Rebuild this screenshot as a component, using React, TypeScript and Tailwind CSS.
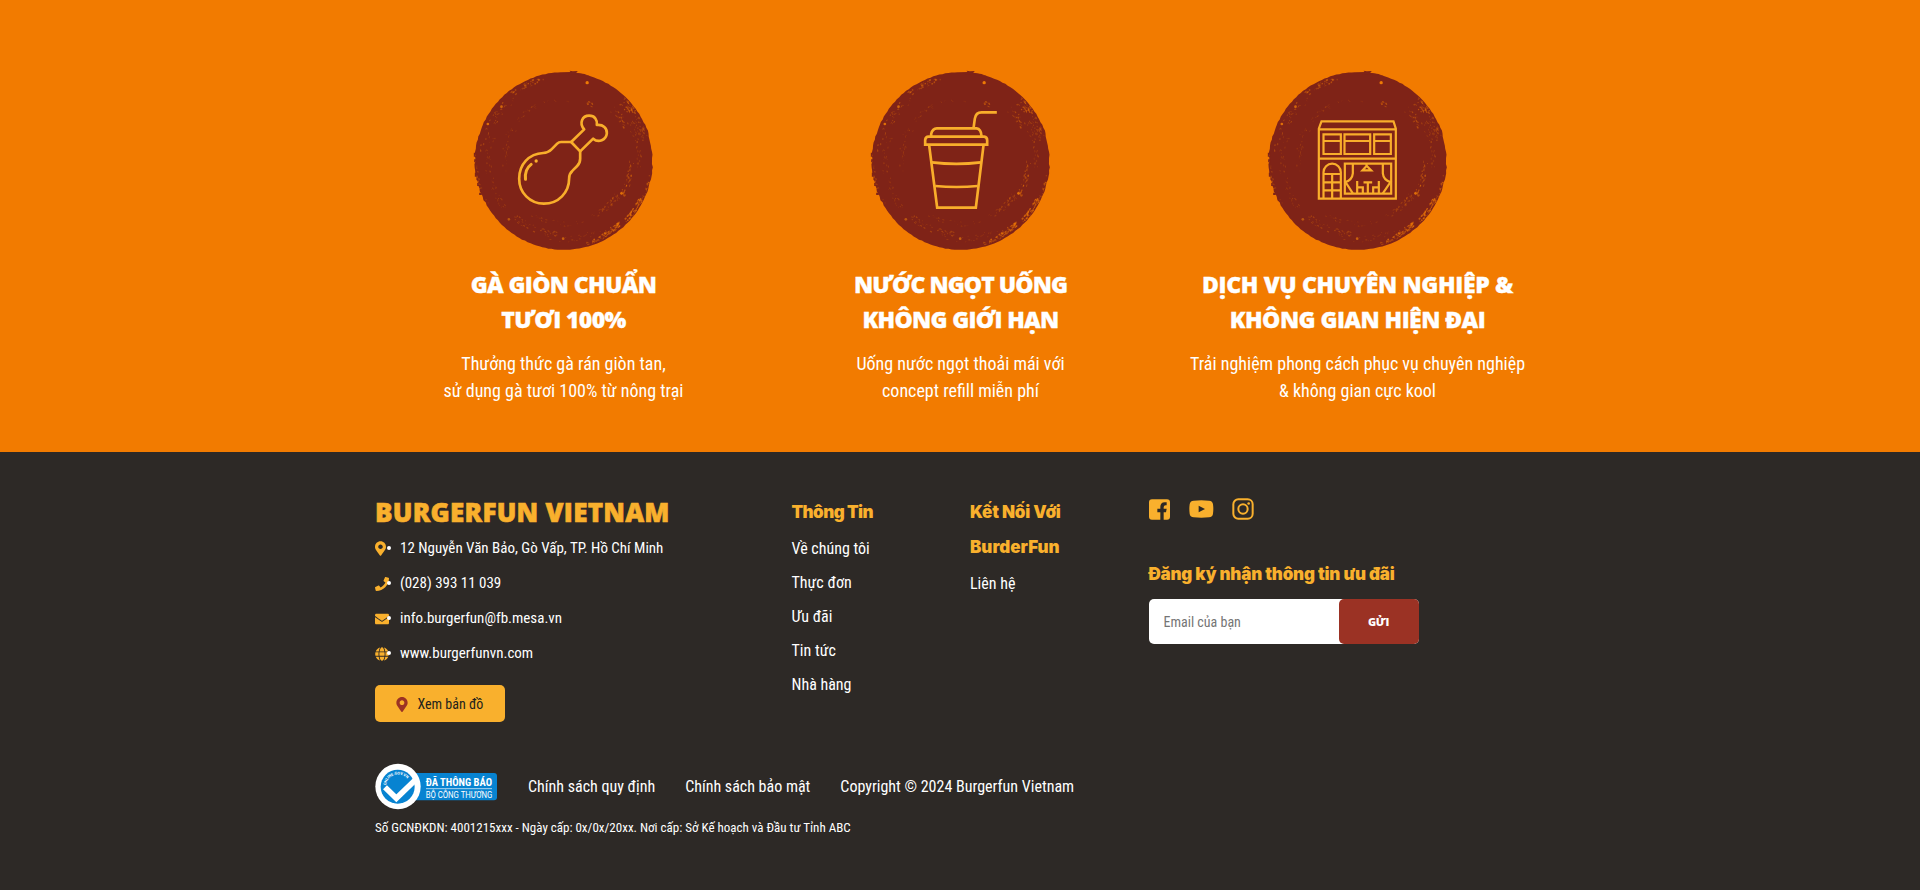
import type { ReactNode } from "react";
import { FaEnvelope, FaGlobe, FaMapMarkerAlt, FaPhone } from "react-icons/fa";

const display = "font-['Open_Sans',sans-serif] font-extrabold";

/* ---------- textured round plate behind each feature icon ---------- */

type Speck = { x: number; y: number; rx: number; ry: number; a: number; o: number };

// radius, start angle, end angle, radial jitter, count, max size, opacity
const arcs: number[][] = [
  [252, -127, -103, 8, 34, 4.2, 0.6],
  [236, -152, -128, 8, 12, 3, 0.4],
  [246, -176, -136, 8, 24, 3.2, 0.6],
  [184, -158, -84, 6, 30, 2.8, 0.3],
  [178, 165, 215, 10, 24, 2.8, 0.22],
  [226, 140, 200, 10, 50, 3, 0.28],
  [262, 150, 186, 4, 18, 2.6, 0.5],
  [222, 95, 132, 10, 40, 3.2, 0.4],
  [188, 70, 120, 8, 26, 3, 0.22],
  [252, -46, -34, 14, 34, 4, 0.6],
  [214, -48, -28, 10, 22, 3.6, 0.5],
  [250, -32, -14, 12, 32, 3.6, 0.5],
  [188, -68, -60, 6, 10, 3.8, 0.5],
  [226, -30, 6, 8, 30, 3, 0.35],
  [204, 0, 36, 8, 44, 3.6, 0.5],
  [190, 32, 62, 8, 34, 3.2, 0.4],
  [262, 8, 26, 4, 18, 3, 0.6],
  [259, 26, 44, 7, 50, 4.6, 0.85],
  [253, 48, 62, 8, 44, 4.4, 0.8],
  [256, 62, 76, 6, 24, 3.6, 0.6],
  [234, 60, 100, 10, 22, 2.6, 0.35],
];

function makeRandom(seed: number) {
  let s = seed;
  return () => {
    s = (s * 16807) % 2147483647;
    return s / 2147483647;
  };
}

const specks: Speck[] = (() => {
  const rnd = makeRandom(4711);
  return arcs.flatMap(([r, a0, a1, jitter, count, size, opacity]) =>
    Array.from({ length: count }, () => {
      const a = a0 + rnd() * (a1 - a0);
      const rr = r + (rnd() - 0.5) * 2 * jitter;
      const rad = (a * Math.PI) / 180;
      return {
        x: 312 + rr * Math.cos(rad),
        y: 303 + rr * Math.sin(rad),
        rx: 1 + rnd() * size,
        ry: 0.8 + rnd() * size * 0.5,
        a: a + 90,
        o: opacity * (0.4 + rnd() * 0.6),
      };
    }),
  );
})();

const platePath = (() => {
  const rnd = makeRandom(99);
  const pts: string[] = [];
  for (let a = 0; a < 360; a += 2) {
    const rad = (a * Math.PI) / 180;
    const rough = (a > 150 && a < 215) || a < 20 || a > 335 ? 4 : 1.6;
    const r = 266.5 + (rnd() - 0.5) * rough;
    pts.push(`${(313 + r * Math.cos(rad)).toFixed(1)} ${(303 + r * Math.sin(rad)).toFixed(1)}`);
  }
  return `M${pts.join("L")}Z`;
})();

function Plate({ children, shift = 0 }: { children: ReactNode; shift?: number }) {
  return (
    <svg width="182" height="180" viewBox="40.5 30 546 540" className="shrink-0" fill="none">
      <path d={platePath} fill="#7f2317" />
      <path d="M300 40L333 36L330 32L340 34L355 33L350 38L375 42L390 48Z" fill="#7f2317" />
      <path d="M43 278h7v12h-7zM44 298h6v9h-6zM46 338h8v12h-8zM53 368h8v10h-8zM59 398h8v7h-8z" fill="#7f2317" />
      {specks.map((s, i) => (
        <ellipse
          key={i}
          cx={s.x}
          cy={s.y}
          rx={s.rx}
          ry={s.ry}
          fill="#e87408"
          opacity={s.o}
          transform={`rotate(${s.a} ${s.x} ${s.y})`}
        />
      ))}
      <circle cx="383" cy="68" r="5" fill="#ee7a05" />
      <circle cx="311" cy="536" r="4" fill="#c9610c" />
      <circle cx="148" cy="478" r="4" fill="#b9560f" />
      <circle cx="486" cy="400" r="4" fill="#e07008" />
      <circle cx="85" cy="192" r="4" fill="#e07008" />
      <circle cx="126" cy="140" r="4" fill="#d2670b" />
      <g
        transform={`translate(${shift} 0)`}
        stroke="#f9ae2b"
        strokeWidth="8"
        strokeLinecap="round"
        strokeLinejoin="round"
      >
        {children}
      </g>
    </svg>
  );
}

function ChickenIcon() {
  return (
    <>
      <path d="M334 246H304Q297 246 292 251L275 268Q265 278 250 279C208 281 178 313 178 356C178 398 210 431 252 431C296 431 328 398 328 354Q328 341 338 332L352 318Q361 309 361 296V274Z" />
      <path d="M334 246L373 208C357 190 367 167 388 167C405 167 413 180 411 195C430 193 442 204 441 220C439 240 416 250 400 236L361 274" />
      <path d="M197 358C195 340 202 322 214 313" strokeWidth="9" />
      <circle cx="229" cy="303" r="5" fill="#f9ae2b" stroke="none" />
    </>
  );
}

function DrinkIcon() {
  return (
    <g strokeLinecap="butt" strokeLinejoin="miter">
      <path d="M341 205L345 176Q348 157 365 157H411" />
      <path d="M214 228V222Q218 205 231 205H350Q364 207 365 228" />
      <path d="M196 254V240Q197 230 206 230H373Q382 231 382 241V254Z" />
      <path d="M208 256L232 443H348L371 256" />
      <path d="M216 307Q290 316 363 307M226 378Q290 384 354 378" />
    </g>
  );
}

function RestaurantIcon() {
  return (
    <g strokeLinecap="butt" strokeLinejoin="miter" strokeWidth="6.6">
      <path d="M192 416V206L200 184H416L423 206V416ZM192 208H423M192 296H423" />
      <path d="M206 223H258V282H206ZM206 243H258M269 223H346V282H269ZM269 243H346M358 223H408V282H358ZM358 243H408" />
      <path d="M206 414V337A26 26 0 0 1 258 337V414M206 342H258M206 367H258M206 391H258M232 342V414" />
      <path d="M270 311H409V401H270Z" />
      <path d="M335 311V318L323 331H349L336 318" />
      <path d="M294 311V340Q292 360 272 366L294 400M384 311V340Q386 360 407 366L384 400" />
      <path d="M326 367H352M339 367V400M307 363V400M307 382H324V400M372 363V400M372 382H355V400" />
    </g>
  );
}

const features = [
  {
    icon: <ChickenIcon />,
    shift: 1,
    title: [
      { text: "GÀ GIÒN CHUẨN", tracking: "tracking-[-0.65px]" },
      { text: "TƯƠI 100%", tracking: "tracking-[-0.6px]" },
    ],
    text: ["Thưởng thức gà rán giòn tan,", "sử dụng gà tươi 100% từ nông trại"],
  },
  {
    icon: <DrinkIcon />,
    shift: 10,
    title: [
      { text: "NƯỚC NGỌT UỐNG", tracking: "tracking-[-0.95px]" },
      { text: "KHÔNG GIỚI HẠN", tracking: "tracking-[-0.7px]" },
    ],
    text: ["Uống nước ngọt thoải mái với", "concept refill miễn phí"],
  },
  {
    icon: <RestaurantIcon />,
    shift: 4,
    title: [
      { text: "DỊCH VỤ CHUYÊN NGHIỆP &", tracking: "tracking-[-0.35px]" },
      { text: "KHÔNG GIAN HIỆN ĐẠI", tracking: "tracking-[-0.55px]" },
    ],
    text: ["Trải nghiệm phong cách phục vụ chuyên nghiệp", "& không gian cực kool"],
  },
];

/* ---------- footer ---------- */

const contacts = [
  { Icon: FaMapMarkerAlt, size: "w-[11px] h-[15px]", label: "12 Nguyễn Văn Bảo, Gò Vấp, TP. Hồ Chí Minh" },
  { Icon: FaPhone, size: "size-[14px]", label: "(028) 393 11 039" },
  { Icon: FaEnvelope, size: "size-[14px]", label: "info.burgerfun@fb.mesa.vn" },
  { Icon: FaGlobe, size: "size-[14px]", label: "www.burgerfunvn.com" },
];

function FooterHeading({ children }: { children: ReactNode }) {
  return (
    <h3 className="pt-[1px] font-['Inter',sans-serif] text-[17px] leading-[35px] font-black text-[#f9b02d]">
      {children}
    </h3>
  );
}

function Socials() {
  return (
    <div className="flex h-[22px] items-center">
      <svg width="21" height="21" viewBox="1 2 63 62">
        <path
          fill="#f9b02d"
          fillRule="evenodd"
          d="M10 2H55Q64 2 64 11V55Q64 64 55 64H45V41H52L54 31H45V26Q45 20 51 20H54V11H48Q35 11 35 25V31H26V41H35V64H10Q1 64 1 55V11Q1 2 10 2Z"
        />
      </svg>
      <svg width="25" height="22" viewBox="0 0 75 66" className="ml-[19px]">
        <path
          fill="#f9b02d"
          fillRule="evenodd"
          d="M14 8Q37 5 60 8Q71 9 72 19Q74 33 72 47Q71 57 60 58Q37 60 14 58Q3 57 2 47Q0 33 2 19Q3 9 14 8ZM29 23V43L48 33Z"
        />
      </svg>
      <svg width="22" height="22" viewBox="0 0 66 66" fill="none" stroke="#f9b02d" className="ml-[18.5px]">
        <rect x="4" y="4" width="58" height="58" rx="15" strokeWidth="6" />
        <circle cx="33" cy="33" r="14" strokeWidth="6" />
        <circle cx="50" cy="16.500" r="4" fill="#f9b02d" stroke="none" />
      </svg>
    </div>
  );
}

function NoticeBadge() {
  return (
    <svg width="122" height="45" viewBox="45 42 366 135" className="mr-[1px] shrink-0 overflow-visible">
      <rect x="130" y="69" width="281" height="82" rx="9" fill="#0783d1" />
      <circle cx="114" cy="109.500" r="68" fill="#fff" />
      <circle cx="113" cy="110" r="51" fill="#0783d1" />
      <path d="M75 112L109 145L172 84" fill="none" stroke="#fff" strokeWidth="17" />
      <path id="badge-arc" d="M78 106A36 36 0 0 1 148 98" fill="none" />
      <text fill="#fff" fontSize="11.500" fontWeight="700" fontFamily="Roboto, sans-serif">
        <textPath href="#badge-arc" textLength="84">
          ONLINE.GOV.VN
        </textPath>
      </text>
      <text x="197" y="108" fill="#fff" fontSize="35" fontWeight="700" fontFamily="'Roboto Condensed', sans-serif" textLength="199" lengthAdjust="spacingAndGlyphs">
        ĐÃ THÔNG BÁO
      </text>
      <path d="M198 116H396" stroke="#fff" strokeWidth="2" />
      <text x="197" y="143" fill="#fff" fontSize="25" fontFamily="Roboto, sans-serif" textLength="200" lengthAdjust="spacingAndGlyphs">
        BỘ CÔNG THƯƠNG
      </text>
    </svg>
  );
}

export default function App() {
  return (
    <div className="min-h-[890px] bg-[#2d2926] font-['Roboto_Condensed',Roboto,sans-serif] text-white">
      <section className="flex h-[452px] justify-center bg-[#f27b00] pt-[70px] pl-[1px]">
        <div className="grid w-[1191px] grid-cols-3">
          {features.map((f) => (
            <article key={f.title[0].text} className="flex flex-col items-center text-center">
              <Plate shift={f.shift}>{f.icon}</Plate>
              <h2 className={`${display} mt-[17px] text-[23px] leading-[35px] [-webkit-text-stroke:0.3px_white]`}>
                {f.title.map((line) => (
                  <span key={line.text} className={`block ${line.tracking}`}>
                    {line.text}
                  </span>
                ))}
              </h2>
              <p className="mt-[13px] text-lg leading-[27px]">
                {f.text.map((line) => (
                  <span key={line} className="block">
                    {line}
                  </span>
                ))}
              </p>
            </article>
          ))}
        </div>
      </section>

      <footer className="pt-[42px] pl-[375px]">
        <div className="flex h-[270px] items-start">
          <div className="w-[416.500px]">
            <h1
              className={`${display} text-[26px] leading-[36px] tracking-[0.25px] text-[#f9b02d] [-webkit-text-stroke:0.6px_#f9b02d]`}
            >
              BURGERFUN VIETNAM
            </h1>
            <ul className="mt-[1px]">
              {contacts.map(({ Icon, size, label }) => (
                <li key={label} className="relative flex h-[35px] items-center text-[15px]">
                  <span className="flex w-[25px]">
                    <Icon className={`${size} text-[#f9b02d]`} />
                  </span>
                  <span className="absolute top-[15px] left-[12px] size-[3.5px] rounded-full bg-white" />
                  <span>{label}</span>
                </li>
              ))}
            </ul>
            <button className="mt-[14px] flex h-[37px] w-[130px] items-center gap-[9.5px] rounded-[5px] bg-[#f9b02d] pt-[1px] pl-[21px] text-[14px] text-[#231f1c]">
              <FaMapMarkerAlt className="h-[15px] w-[12px] text-[#9b3224]" />
              Xem bản đồ
            </button>
          </div>

          <nav className="w-[178.500px]">
            <FooterHeading>
              <span className="tracking-[-0.55px]">Thông Tin</span>
            </FooterHeading>
            <ul className="mt-[2px] leading-[34px]">
              <li>Về chúng tôi</li>
              <li>Thực đơn</li>
              <li>Ưu đãi</li>
              <li>Tin tức</li>
              <li>Nhà hàng</li>
            </ul>
          </nav>

          <nav className="w-[178.500px]">
            <FooterHeading>
              <span className="block tracking-[-0.2px]">Kết Nối Với</span>
              <span className="block">BurderFun</span>
            </FooterHeading>
            <ul className="mt-[2px] leading-[34px]">
              <li>Liên hệ</li>
            </ul>
          </nav>

          <div className="w-[271px] pt-[4px]">
            <Socials />
            <div className="mt-[36px]">
              <FooterHeading>
                <span className="tracking-[-0.2px]">Đăng ký nhận thông tin ưu đãi</span>
              </FooterHeading>
            </div>
            <form className="mt-[7px] flex h-[45px] w-[270px] rounded-[5px] bg-white">
              <input
                placeholder="Email của bạn"
                className="w-[190px] min-w-0 bg-transparent pt-[2px] pl-[15px] text-[14px] outline-none placeholder:text-[#757575]"
              />
              <button type="button" className={`${display} w-[80px] rounded-[5px] bg-[#9b3224] pt-[1px] text-[11px] tracking-[-0.3px]`}>
                GỬI
              </button>
            </form>
          </div>
        </div>

        <div className="flex h-[45px] items-center gap-[30px]">
          <NoticeBadge />
          <a>Chính sách quy định</a>
          <a>Chính sách bảo mật</a>
          <a>Copyright © 2024 Burgerfun Vietnam</a>
        </div>
        <p className="mt-[9px] text-[13px] leading-[20px]">
          Số GCNĐKDN: 4001215xxx - Ngày cấp: 0x/0x/20xx. Nơi cấp: Sở Kế hoạch và Đầu tư Tỉnh ABC
        </p>
      </footer>
    </div>
  );
}
